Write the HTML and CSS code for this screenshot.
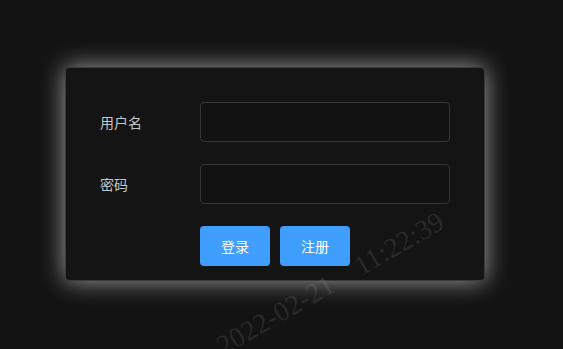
FILE: index.html
```html
<!DOCTYPE html>
<html>
<head>
    <title>登录</title>
    <meta charset="UTF-8">
    <link rel="stylesheet" href="styles.css">
</head>
<body>
    <div class="login-box">
        <form class="login-form">
            <div class="form-item">
                <label class="form-label">用户名</label>
                <input type="text" class="form-input">
            </div>
            <div class="form-item">
                <label class="form-label">密码</label>
                <input type="password" class="form-input">
            </div>
            <div class="form-item form-actions">
                <button type="button" class="btn">登录</button>
                <button type="button" class="btn">注册</button>
            </div>
        </form>
    </div>

    <div class="watermark">2022-02-21&nbsp;&nbsp;&nbsp;&nbsp;11:22:39</div>
</body>
</html>
```

FILE: styles.css
```css
body {
    margin: 0;
    height: 349px;
    overflow: hidden;
    background: #131313;
    font-family: "Noto Sans CJK SC", "Noto Sans", sans-serif;
    font-size: 14px;
}
.login-box {
    width: 350px;
    margin: 67px 0 0 65px;
    padding: 34px 34px 14px 34px;
    background: #141414;
    border: 1px solid #3a3a3a;
    border-radius: 4px;
    box-shadow: 0 0 24px rgba(255, 255, 255, 0.6);
}
.form-item {
    display: flex;
    align-items: center;
    height: 40px;
    margin-bottom: 22px;
}
.form-item:last-child {
    margin-bottom: 0;
}
.form-label {
    width: 100px;
    color: #c4c7cc;
    line-height: 40px;
}
.form-input {
    width: 250px;
    height: 40px;
    box-sizing: border-box;
    padding: 0 15px;
    background: #121212;
    border: 1px solid #363637;
    border-radius: 4px;
    color: #cfd3dc;
    outline: none;
}
.form-actions {
    padding-left: 100px;
    gap: 10px;
}
.btn {
    width: 70px;
    height: 40px;
    border: none;
    border-radius: 4px;
    background: #409eff;
    color: #ffffff;
    font-family: inherit;
    font-size: 14px;
}
.watermark {
    position: absolute;
    left: 211px;
    top: 334px;
    transform: rotate(-30deg);
    transform-origin: left top;
    font-family: "Liberation Serif", serif;
    font-size: 28px;
    color: rgba(255, 255, 255, 0.1);
    white-space: nowrap;
    pointer-events: none;
}
```
